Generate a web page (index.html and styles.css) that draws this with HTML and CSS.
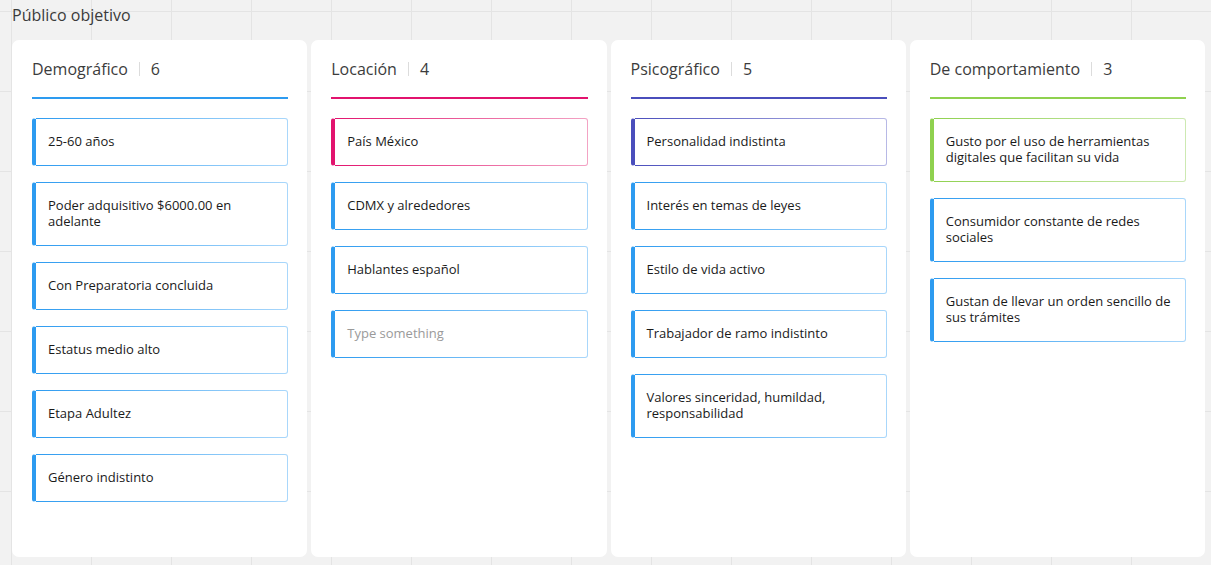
FILE: index.html
```html
<!DOCTYPE html>
<html lang="es">
<head>
<meta charset="utf-8">
<title>Público objetivo</title>
<link rel="stylesheet" href="styles.css">
</head>
<body>
<div class="frame-title">Público objetivo</div>
<div class="board">
  <section class="col col-blue">
    <header class="col-head"><span class="col-name">Demográfico</span><span class="sep"></span><span class="count">6</span></header>
    <div class="items">
      <div class="item">25-60 años</div>
      <div class="item">Poder adquisitivo $6000.00 en adelante</div>
      <div class="item">Con Preparatoria concluida</div>
      <div class="item">Estatus medio alto</div>
      <div class="item">Etapa Adultez</div>
      <div class="item">Género indistinto</div>
    </div>
  </section>
  <section class="col col-pink">
    <header class="col-head"><span class="col-name">Locación</span><span class="sep"></span><span class="count">4</span></header>
    <div class="items">
      <div class="item item-pink">País México</div>
      <div class="item">CDMX y alrededores</div>
      <div class="item">Hablantes español</div>
      <div class="item placeholder">Type something</div>
    </div>
  </section>
  <section class="col col-indigo">
    <header class="col-head"><span class="col-name">Psicográfico</span><span class="sep"></span><span class="count">5</span></header>
    <div class="items">
      <div class="item item-indigo">Personalidad indistinta</div>
      <div class="item">Interés en temas de leyes</div>
      <div class="item">Estilo de vida activo</div>
      <div class="item">Trabajador de ramo indistinto</div>
      <div class="item">Valores sinceridad, humildad, responsabilidad</div>
    </div>
  </section>
  <section class="col col-green">
    <header class="col-head"><span class="col-name">De comportamiento</span><span class="sep"></span><span class="count">3</span></header>
    <div class="items">
      <div class="item item-green">Gusto por el uso de herramientas digitales que facilitan su vida</div>
      <div class="item">Consumidor constante de redes sociales</div>
      <div class="item">Gustan de llevar un orden sencillo de sus trámites</div>
    </div>
  </section>
</div>
</body>
</html>
```
FILE: styles.css
```css
html, body {
  margin: 0;
  padding: 0;
}
body {
  width: 1211px;
  height: 565px;
  overflow: hidden;
  font-family: "Open Sans", "Noto Sans", sans-serif;
  background-color: #f2f2f2;
  background-image:
    linear-gradient(to right, #e4e4e4 1px, transparent 1px),
    linear-gradient(to bottom, #e4e4e4 1px, transparent 1px);
  background-size: 80px 80px;
  background-position: 11px 11px;
}
.frame-title {
  padding: 4px 0 0 12px;
  height: 36px;
  box-sizing: border-box;
  font-size: 16px;
  line-height: 22px;
  color: #3a3a3a;
}
.board {
  display: grid;
  grid-template-columns: repeat(4, 1fr);
  gap: 4px;
  padding: 4px 6px 0 12px;
}
.col {
  background: #fff;
  border-radius: 7px;
  height: 517px;
  box-sizing: border-box;
  padding: 17px 19px 0 20px;
}
.col-head {
  display: flex;
  align-items: center;
  height: 23px;
  padding-bottom: 17px;
  border-bottom: 2px solid #2d9bf0;
  font-size: 16px;
  color: #3c3c3c;
}
.col-pink .col-head { border-bottom-color: #e2136e; }
.col-indigo .col-head { border-bottom-color: #4a4ebc; }
.col-green .col-head { border-bottom-color: #8fd14f; }
.sep {
  width: 1px;
  height: 14px;
  background: #dcdcdc;
  margin: 0 11px 0 11px;
}
.items {
  display: flex;
  flex-direction: column;
  gap: 16px;
  margin-top: 19px;
}
.item {
  font-size: 13px;
  line-height: 16px;
  color: #1a1a1a;
  padding: 14px 12px 16px 12px;
  border: 1px solid transparent;
  border-left: 4px solid #2d9bf0;
  border-radius: 3px;
  background:
    linear-gradient(#fff, #fff) padding-box,
    linear-gradient(to right, #2d9bf0, #a9d7fb) border-box;
}
.item-pink {
  border-left-color: #e2136e;
  background:
    linear-gradient(#fff, #fff) padding-box,
    linear-gradient(to right, #e2136e, #f3a3c4) border-box;
}
.item-indigo {
  border-left-color: #4a4ebc;
  background:
    linear-gradient(#fff, #fff) padding-box,
    linear-gradient(to right, #4a4ebc, #b8b9e6) border-box;
}
.item-green {
  border-left-color: #8fd14f;
  background:
    linear-gradient(#fff, #fff) padding-box,
    linear-gradient(to right, #8fd14f, #cde9b2) border-box;
}
.placeholder {
  color: #9a9a9a;
}
```
